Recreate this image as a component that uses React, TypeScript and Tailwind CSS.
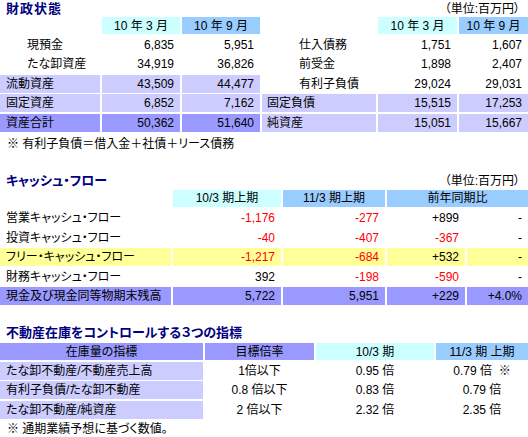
import React from "react";

const F = "font-['Liberation_Sans','Noto_Sans_CJK_JP',sans-serif] [font-feature-settings:'palt']";

const CYAN = "bg-[#ccffff]";
const BLUE = "bg-[#99ccff]";
const LAV = "bg-[#ccccff]";
const DARK = "bg-[#9999ff]";
const YEL = "bg-[#ffff99]";

function C({ children, cls = "", h = "h-[18px]" }: { children?: React.ReactNode; cls?: string; h?: string }) {
  return <div className={`${h} flex items-center whitespace-nowrap text-[12px] leading-none ${cls}`}>{children}</div>;
}

const Num = ({ v, bg = "", red = false }: { v: string; bg?: string; red?: boolean }) => (
  <C cls={`justify-end pr-[6px] ${bg} ${red ? "text-[#ff0000]" : ""}`}>{v}</C>
);

const Head = ({ t, bg, span = "" }: { t: string; bg: string; span?: string }) => (
  <C h="h-[17px]" cls={`justify-center ${bg} ${span}`}>{t}</C>
);

const Title = ({ t, cls = "" }: { t: string; cls?: string }) => (
  <span className={`pl-[6px] text-[13px] font-bold text-[#000080] ${cls}`}>{t}</span>
);

const Unit = () => <span className="pr-[8px] text-[12px]">（単位:百万円）</span>;

export default function App() {
  const left = [
    { l: "現預金", a: "6,835", b: "5,951", bg: "", ind: true },
    { l: "たな卸資産", a: "34,919", b: "36,826", bg: "", ind: true },
    { l: "流動資産", a: "43,509", b: "44,477", bg: LAV },
    { l: "固定資産", a: "6,852", b: "7,162", bg: LAV },
    { l: "資産合計", a: "50,362", b: "51,640", bg: DARK },
  ];
  const right = [
    { l: "仕入債務", a: "1,751", b: "1,607", bg: "", ind: true },
    { l: "前受金", a: "1,898", b: "2,407", bg: "", ind: true },
    { l: "有利子負債", a: "29,024", b: "29,031", bg: "", ind: true },
    { l: "固定負債", a: "15,515", b: "17,253", bg: LAV },
    { l: "純資産", a: "15,051", b: "15,667", bg: LAV },
  ];
  const cf = [
    { l: "営業キャッシュ・フロー", v: [["-1,176", 1], ["-277", 1], ["+899", 0], ["-", 0]], bg: "" },
    { l: "投資キャッシュ・フロー", v: [["-40", 1], ["-407", 1], ["-367", 1], ["-", 0]], bg: "" },
    { l: "フリー・キャッシュ・フロー", v: [["-1,217", 1], ["-684", 1], ["+532", 0], ["-", 0]], bg: YEL },
    { l: "財務キャッシュ・フロー", v: [["392", 0], ["-198", 1], ["-590", 1], ["-", 0]], bg: "" },
    { l: "現金及び現金同等物期末残高", v: [["5,722", 0], ["5,951", 0], ["+229", 0], ["+4.0%", 0]], bg: DARK },
  ];
  const ind = [
    ["たな卸不動産/不動産売上高", "1倍以下", "0.95 倍", "0.79 倍 \u00a0※"],
    ["有利子負債/たな卸不動産", "0.8 倍以下", "0.83 倍", "0.79 倍"],
    ["たな卸不動産/純資産", "2 倍以下", "2.32 倍", "2.35 倍"],
  ];

  return (
    <div className={`${F} w-[528px] h-[437px] overflow-hidden bg-white text-black`}>
      {/* 財政状態 */}
      <div className="h-[17px] flex items-center justify-between">
        <Title t="財政状態" cls="tracking-[1px]" />
        <Unit />
      </div>
      <div className="flex gap-[2px]">
        <div className="grid grid-cols-[100px_78px_78px] gap-x-[2px] gap-y-[1.5px]">
          <C h="h-[17px]" />
          <Head t="10 年 3 月" bg={CYAN} />
          <Head t="10 年 9 月" bg={BLUE} />
          {left.map(r => (
            <React.Fragment key={r.l}>
              <C cls={`${r.ind ? "pl-[27px]" : "pl-[6px]"} ${r.bg}`}>{r.l}</C>
              <Num v={r.a} bg={r.bg} />
              <Num v={r.b} bg={r.bg} />
            </React.Fragment>
          ))}
        </div>
        <div className="grid grid-cols-[114px_79px_69px] gap-x-[2px] gap-y-[1.5px]">
          <C h="h-[17px]" />
          <Head t="10 年 3 月" bg={CYAN} />
          <Head t="10 年 9 月" bg={BLUE} />
          {right.map(r => (
            <React.Fragment key={r.l}>
              <C cls={`${r.ind ? "pl-[37px]" : "pl-[5px]"} ${r.bg}`}>{r.l}</C>
              <Num v={r.a} bg={r.bg} />
              <Num v={r.b} bg={r.bg} />
            </React.Fragment>
          ))}
        </div>
      </div>
      <div className="h-[16px] mt-[4px] flex items-center pl-[7px] text-[12px]">※ 有利子負債＝借入金＋社債＋リース債務</div>

      {/* キャッシュ・フロー */}
      <div className="h-[18px] mt-[20px] flex items-center justify-between">
        <Title t="キャッシュ・フロー" />
        <Unit />
      </div>
      <div className="grid grid-cols-[171px_108px_102px_78px_61px] gap-x-[2px] gap-y-[1.5px]">
        <C />
        <Head t="10/3 期上期" bg={CYAN} />
        <Head t="11/3 期上期" bg={BLUE} />
        <Head t="前年同期比" bg={BLUE} span="col-span-2" />
        {cf.map(r => (
          <React.Fragment key={r.l}>
            <C cls={`pl-[6px] ${r.bg}`}>{r.l}</C>
            {r.v.map(([v, red], i) => (
              <Num key={i} v={v as string} bg={r.bg} red={red === 1} />
            ))}
          </React.Fragment>
        ))}
      </div>

      {/* 指標 */}
      <div className="h-[18px] mt-[19px] flex items-center">
        <Title t="不動産在庫をコントロールする３つの指標" />
      </div>
      <div className="mt-[1px] grid grid-cols-[203px_109px_118px_92px] gap-x-[2px] gap-y-[1.5px]">
        <Head t="在庫量の指標" bg={DARK} />
        <Head t="目標倍率" bg={DARK} />
        <Head t="10/3 期" bg={CYAN} />
        <Head t="11/3 期  上期" bg={BLUE} />
        {ind.map(r => (
          <React.Fragment key={r[0]}>
            <C cls={`pl-[6px] ${LAV}`}>{r[0]}</C>
            <C cls="justify-center">{r[1]}</C>
            <C cls="justify-center">{r[2]}</C>
            <C cls="justify-center">{r[3]}</C>
          </React.Fragment>
        ))}
      </div>
      <div className="h-[16px] mt-[2px] flex items-center pl-[7px] text-[12px]">※ 通期業績予想に基づく数値。</div>
    </div>
  );
}
